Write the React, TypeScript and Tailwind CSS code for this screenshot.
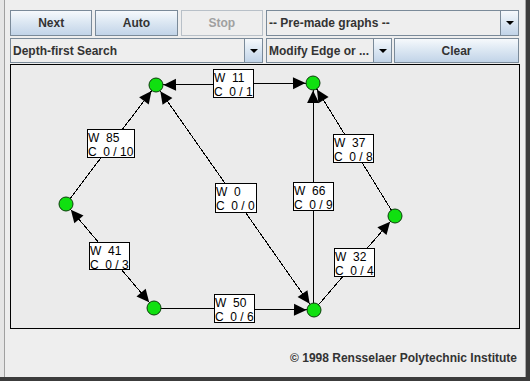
import React from "react";

type P = [number, number];

const N: Record<string, P> = {
  n1: [156, 85],
  n2: [313, 83],
  n3: [66, 204],
  n4: [395, 216],
  n5: [154, 308],
  n6: [314, 310],
};

type Edge = {
  a: string;
  b: string;
  box: [number, number, number, number];
  w: string;
  c: string;
  arrows: string[];
};

const EDGES: Edge[] = [
  { a: "n1", b: "n2", box: [213, 69, 40, 28], w: "11", c: "0 / 1", arrows: ["n1", "n2"] },
  { a: "n3", b: "n1", box: [87, 129, 47, 28], w: "85", c: "0 / 10", arrows: ["n1"] },
  { a: "n1", b: "n6", box: [215, 183, 41, 29], w: "0", c: "0 / 0", arrows: ["n1", "n6"] },
  { a: "n6", b: "n2", box: [293, 182, 40, 28], w: "66", c: "0 / 9", arrows: ["n2"] },
  { a: "n4", b: "n2", box: [333, 134, 40, 28], w: "37", c: "0 / 8", arrows: ["n2"] },
  { a: "n6", b: "n4", box: [334, 248, 40, 28], w: "32", c: "0 / 4", arrows: ["n4"] },
  { a: "n3", b: "n5", box: [89, 242, 40, 27], w: "41", c: "0 / 3", arrows: ["n3", "n5"] },
  { a: "n5", b: "n6", box: [214, 294, 40, 28], w: "50", c: "0 / 6", arrows: ["n6"] },
];

function arrowPoints(from: P, to: P): string {
  const dx = to[0] - from[0];
  const dy = to[1] - from[1];
  const len = Math.hypot(dx, dy);
  const ux = dx / len;
  const uy = dy / len;
  const tipX = to[0] - ux * 7.5;
  const tipY = to[1] - uy * 7.5;
  const bx = tipX - ux * 12.5;
  const by = tipY - uy * 12.5;
  const px = -uy * 6;
  const py = ux * 6;
  return `${tipX},${tipY} ${bx + px},${by + py} ${bx - px},${by - py}`;
}

function Graph() {
  return (
    <svg
      className="absolute inset-0"
      width={508}
      height={263}
      viewBox="11 65 508 263"
    >
      {EDGES.map((e, i) => (
        <line
          key={"l" + i}
          x1={N[e.a][0]}
          y1={N[e.a][1]}
          x2={N[e.b][0]}
          y2={N[e.b][1]}
          stroke="#000"
          strokeWidth={1}
          shapeRendering="crispEdges"
        />
      ))}
      {EDGES.map((e, i) =>
        e.arrows.map((t) => {
          const other = t === e.a ? e.b : e.a;
          return (
            <polygon
              key={"a" + i + t}
              points={arrowPoints(N[other], N[t])}
              fill="#000"
            />
          );
        })
      )}
      {Object.entries(N).map(([k, p]) => (
        <circle
          key={k}
          cx={p[0]}
          cy={p[1]}
          r={7}
          fill="#10e010"
          stroke="#0b3d0b"
          strokeWidth={1}
        />
      ))}
      {EDGES.map((e, i) => {
        const [x, y, w, h] = e.box;
        return (
          <g key={"b" + i}>
            <rect
              x={x + 0.5}
              y={y + 0.5}
              width={w}
              height={h}
              fill="#fff"
              stroke="#000"
              strokeWidth={1}
            />
            <text
              x={x + 1}
              y={y + 13}
              fontSize={12}
              fontFamily="'Liberation Sans', Arial, sans-serif"
              fill="#000"
              xmlSpace="preserve"
              style={{ whiteSpace: "pre" }}
            >
              {"W  " + e.w}
            </text>
            <text
              x={x + 1}
              y={y + 27}
              fontSize={12}
              fontFamily="'Liberation Sans', Arial, sans-serif"
              fill="#000"
              xmlSpace="preserve"
              style={{ whiteSpace: "pre" }}
            >
              {"C  " + e.c}
            </text>
          </g>
        );
      })}
    </svg>
  );
}

function Btn({ label, disabled }: { label: string; disabled?: boolean }) {
  return (
    <div
      className={
        disabled
          ? "flex-1 h-full flex items-center justify-center border border-[#b8c0c8] bg-[#eeeeee] text-[12px] font-bold text-[#a0a0a0]"
          : "flex-1 h-full flex items-center justify-center border border-[#7a8a99] bg-[linear-gradient(to_bottom,#f6f9fc,#dde8f3_45%,#c2d4e8)] text-[12px] font-bold text-[#333333]"
      }
    >
      {label}
    </div>
  );
}

function Combo({ label, className }: { label: string; className: string }) {
  return (
    <div className={"h-full flex border border-[#7a8a99] " + className}>
      <div className="flex-1 min-w-0 flex items-center pl-[2px] bg-[#eeeeee] text-[12px] font-bold text-[#333333] whitespace-nowrap overflow-hidden">
        {label}
      </div>
      <div className="w-[18px] border-l border-[#7a8a99] bg-[linear-gradient(to_bottom,#f6f9fc,#dde8f3_45%,#c2d4e8)] flex items-center justify-center">
        <div className="w-0 h-0 border-l-[4px] border-r-[4px] border-t-[4px] border-l-transparent border-r-transparent border-t-black" />
      </div>
    </div>
  );
}

export default function App() {
  return (
    <div className="w-[530px] h-[381px] bg-[#3c3c3c] overflow-hidden font-['Liberation_Sans',Arial,sans-serif]">
      <div className="w-[526px] h-[377px] bg-[#eeeeee] flex border-r border-[#a8a8a8]">
        <div className="w-[4px] bg-[#e6e6e6]" />
        <div className="w-px bg-[#a0a0a0]" />
        <div className="pl-[5px] pt-[10px] flex flex-col">
          <div className="w-[510px] h-[26px] flex gap-[3px]">
            <div className="w-[253px] h-full flex gap-[3px]">
              <Btn label="Next" />
              <Btn label="Auto" />
              <Btn label="Stop" disabled />
            </div>
            <Combo label="-- Pre-made graphs --" className="w-[253px]" />
          </div>
          <div className="w-[510px] h-[25px] mt-[2px] flex gap-[3px]">
            <Combo label="Depth-first Search" className="w-[253px]" />
            <div className="w-[253px] h-full flex gap-[2px]">
              <Combo label="Modify Edge or ..." className="w-[126px]" />
              <Btn label="Clear" />
            </div>
          </div>
          <div className="relative w-[510px] h-[265px] mt-[1px] border border-black bg-[#ebebeb]">
            <Graph />
          </div>
          <div className="w-[510px] mt-[22px] pr-[3px] text-right text-[12px] leading-[14px] font-bold text-[#333333]">
            © 1998 Rensselaer Polytechnic Institute
          </div>
        </div>
      </div>
    </div>
  );
}
